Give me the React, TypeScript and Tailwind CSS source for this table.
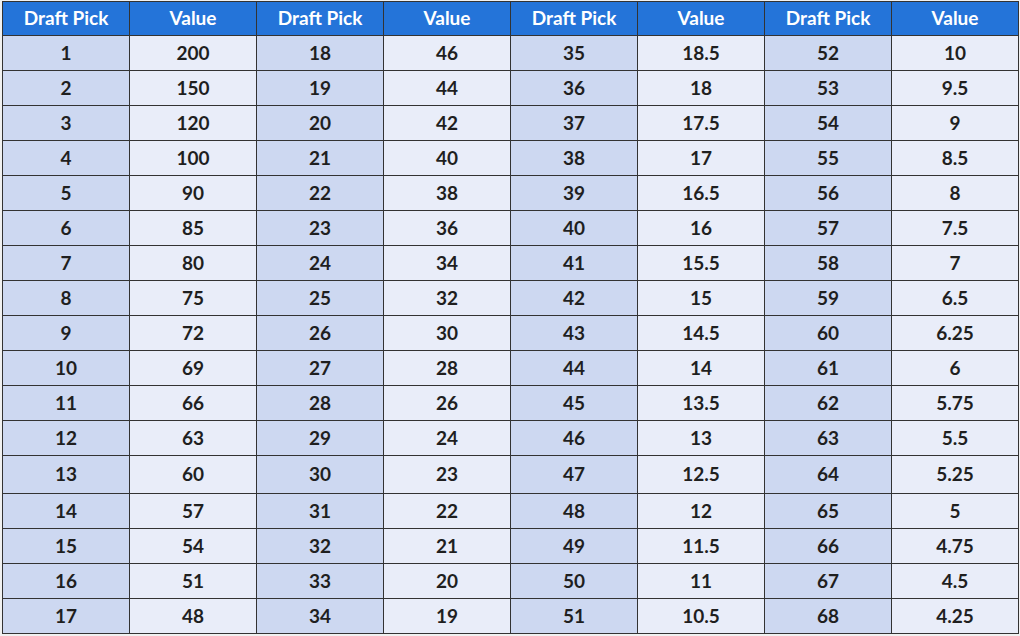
import { Fragment } from "react";

const values: string[][] = [
  ["200", "150", "120", "100", "90", "85", "80", "75", "72", "69", "66", "63", "60", "57", "54", "51", "48"],
  ["46", "44", "42", "40", "38", "36", "34", "32", "30", "28", "26", "24", "23", "22", "21", "20", "19"],
  ["18.5", "18", "17.5", "17", "16.5", "16", "15.5", "15", "14.5", "14", "13.5", "13", "12.5", "12", "11.5", "11", "10.5"],
  ["10", "9.5", "9", "8.5", "8", "7.5", "7", "6.5", "6.25", "6", "5.75", "5.5", "5.25", "5", "4.75", "4.5", "4.25"],
];

const App = () => {
  const rows = Array.from({ length: 17 }, (_, i) => i);

  return (
    <div className="w-[1020px] h-[636px] bg-[#f1f1f1] pt-px pl-[2px] font-['Lato',sans-serif]">
      <table className="table-fixed border-collapse w-[1016px] text-[19px] font-bold text-[#1f1f1f]">
        <thead>
          <tr className="h-[34px]">
            {values.map((_, c) => (
              <Fragment key={c}>
                <th className="w-[127px] border border-[#333] bg-[#2474d9] text-white font-bold">
                  Draft Pick
                </th>
                <th className="w-[127px] border border-[#333] bg-[#2474d9] text-white font-bold">
                  Value
                </th>
              </Fragment>
            ))}
          </tr>
        </thead>
        <tbody>
          {rows.map((r) => (
            <tr key={r} className={r === 12 ? "h-[38px]" : "h-[35px]"}>
              {values.map((col, c) => (
                <Fragment key={c}>
                  <td className="border border-[#333] bg-[#cdd8f1] text-center">
                    {c * 17 + r + 1}
                  </td>
                  <td className="border border-[#333] bg-[#e9edf9] text-center">
                    {col[r]}
                  </td>
                </Fragment>
              ))}
            </tr>
          ))}
        </tbody>
      </table>
    </div>
  );
};

export default App;
